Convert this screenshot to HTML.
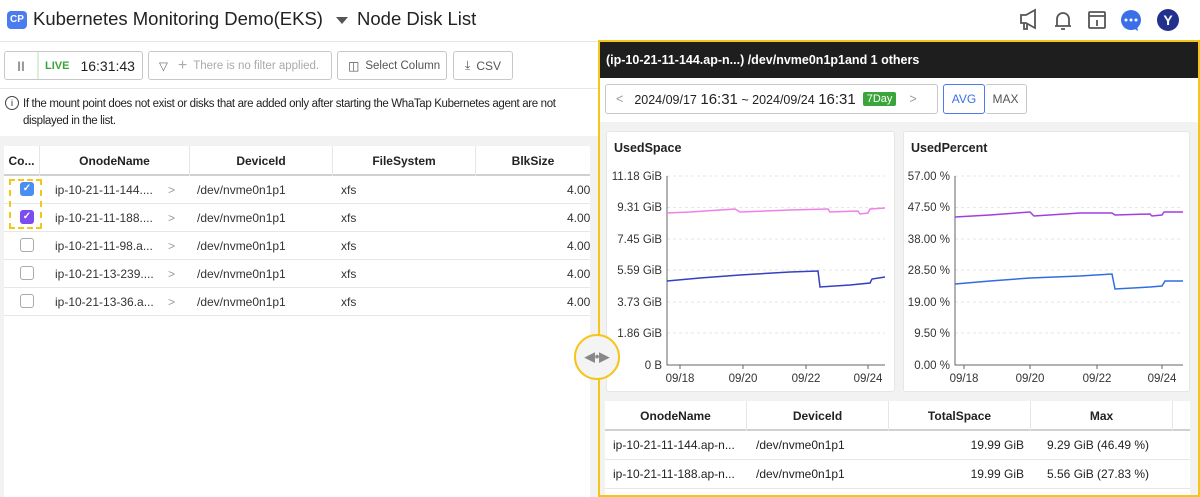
<!DOCTYPE html>
<html><head><meta charset="utf-8"><style>
*{box-sizing:border-box;margin:0;padding:0}
body{width:1200px;height:497px;overflow:hidden;background:#fff;font-family:"Liberation Sans",sans-serif;color:#222;position:relative}
.a{position:absolute}
.btn{position:absolute;border:1px solid #c8c8c8;border-radius:3px;background:#fff;font-size:12px;color:#555;display:flex;align-items:center}
.th{position:absolute;top:0;height:30px;line-height:30px;text-align:center;font-size:12px;font-weight:bold;border-right:1px solid #e6e6e6;color:#222}
.row{position:absolute;left:4px;width:586px;height:28px;border-bottom:1px solid #e6e6e6;font-size:12px;color:#333;overflow:hidden}
.row span{position:absolute;top:7px}
.cb{position:absolute;left:16px;top:6px;width:14px;height:14px;border:1px solid #aaa;border-radius:3px;background:#fff}
.ck{border:none;color:#fff;font-size:10px;text-align:center;line-height:14px;font-weight:bold}
.ax{font-size:11.5px;fill:#333;font-family:"Liberation Sans",sans-serif}
</style></head><body>
<div class="a" style="left:7px;top:11px;width:20px;height:18px;background:#4a7cf0;border-radius:4px;color:#fff;font-size:10px;font-weight:bold;text-align:center;line-height:18px">CP</div>
<div class="a" style="left:33px;top:8px;font-size:18.5px;color:#222">Kubernetes Monitoring Demo(EKS)</div>
<div class="a" style="left:336px;top:17px;width:0;height:0;border-left:6px solid transparent;border-right:6px solid transparent;border-top:7px solid #555"></div>
<div class="a" style="left:357px;top:8px;font-size:18.5px;color:#222">Node Disk List</div>
<svg class="a" style="left:1015px;top:8px" width="170" height="26" viewBox="0 0 170 26">
<g fill="none" stroke="#555" stroke-width="1.8">
<path d="M6 7h5l9-5v18l-9-5H6z M9 15v6h3v-6"/>
<path d="M40 18h16M42 18v-7a6 6 0 0 1 12 0v7M46 21h4"/>
<rect x="74" y="4" width="16" height="16" rx="1"/><path d="M74 8h16M82 12v6"/>
</g>
<circle cx="116" cy="12" r="10" fill="#3b6fe8"/><path d="M118 20l5 3-1-5z" fill="#3b6fe8"/>
<circle cx="111" cy="12" r="1.5" fill="#fff"/><circle cx="116" cy="12" r="1.5" fill="#fff"/><circle cx="121" cy="12" r="1.5" fill="#fff"/>
<circle cx="153" cy="12" r="11" fill="#23308e"/><text x="153" y="17" text-anchor="middle" font-size="14" font-weight="bold" fill="#fff" font-family="Liberation Sans">Y</text>
</svg>
<div class="a" style="left:0;top:41px;width:598px;height:1px;background:#e6e6e6"></div>
<div class="btn" style="left:4px;top:51px;width:139px;height:29px">
<span style="width:32px;text-align:center;color:#999;font-size:14px;font-weight:bold">II</span>
<span style="width:2px;height:27px;background:#d9f0d9"></span>
<span style="color:#3aa53a;font-size:11px;font-weight:bold;margin-left:6px">LIVE</span>
<span style="color:#222;font-size:14px;margin-left:11px">16:31:43</span></div>
<div class="btn" style="left:148px;top:51px;width:184px;height:29px;color:#aaa;font-size:11.5px"><span style="margin-left:10px;color:#666">&#9661;</span><span style="margin-left:10px;font-size:16px">+</span><span style="margin-left:6px">There is no filter applied.</span></div>
<div class="btn" style="left:337px;top:51px;width:110px;height:29px;font-size:11.5px"><span style="margin-left:10px;font-size:12px">&#9707;</span><span style="margin-left:6px">Select Column</span></div>
<div class="btn" style="left:453px;top:51px;width:60px;height:29px"><span style="margin-left:11px">&#10515;</span><span style="margin-left:6px">CSV</span></div>
<div class="a" style="left:0;top:88px;width:598px;height:1px;background:#e6e6e6"></div>
<div class="a" style="left:5px;top:96px;width:14px;height:14px;border:1px solid #444;border-radius:50%;font-size:9px;text-align:center;line-height:12px">i</div>
<div class="a" style="left:23px;top:96px;width:575px;font-size:11.5px;line-height:17px;color:#222;letter-spacing:-0.35px">If the mount point does not exist or disks that are added only after starting the WhaTap Kubernetes agent are not displayed in the list.</div>
<div class="a" style="left:0;top:136px;width:598px;height:361px;background:#f2f2f2"></div>
<div class="a" style="left:4px;top:146px;width:586px;height:172px;background:#fff">
<div class="a" style="left:0;top:0;width:586px;height:30px;border-bottom:2px solid #d0d0d0">
<div class="th" style="left:0;width:36px">Co...</div>
<div class="th" style="left:36px;width:150px">OnodeName</div>
<div class="th" style="left:186px;width:143px">DeviceId</div>
<div class="th" style="left:329px;width:143px">FileSystem</div>
<div class="th" style="left:472px;width:114px;border:none">BlkSize</div></div>
</div>
<div class="a" style="left:4px;top:318px;width:586px;height:179px;background:#fff"></div>
<div class="row" style="top:176px"><div class="cb ck" style="background:#4a8ef0">&#10003;</div><span style="left:51px">ip-10-21-11-144....</span><span style="left:164px;color:#999">&gt;</span><span style="left:193px">/dev/nvme0n1p1</span><span style="left:337px">xfs</span><span style="left:563px">4.00</span></div>
<div class="row" style="top:204px"><div class="cb ck" style="background:#7b4cf0">&#10003;</div><span style="left:51px">ip-10-21-11-188....</span><span style="left:164px;color:#999">&gt;</span><span style="left:193px">/dev/nvme0n1p1</span><span style="left:337px">xfs</span><span style="left:563px">4.00</span></div>
<div class="row" style="top:232px"><div class="cb"></div><span style="left:51px">ip-10-21-11-98.a...</span><span style="left:164px;color:#999">&gt;</span><span style="left:193px">/dev/nvme0n1p1</span><span style="left:337px">xfs</span><span style="left:563px">4.00</span></div>
<div class="row" style="top:260px"><div class="cb"></div><span style="left:51px">ip-10-21-13-239....</span><span style="left:164px;color:#999">&gt;</span><span style="left:193px">/dev/nvme0n1p1</span><span style="left:337px">xfs</span><span style="left:563px">4.00</span></div>
<div class="row" style="top:288px"><div class="cb"></div><span style="left:51px">ip-10-21-13-36.a...</span><span style="left:164px;color:#999">&gt;</span><span style="left:193px">/dev/nvme0n1p1</span><span style="left:337px">xfs</span><span style="left:563px">4.00</span></div>
<div class="a" style="left:9px;top:179px;width:33px;height:50px;border:2px dashed #f5c518"></div>
<div class="a" style="left:598px;top:40px;width:602px;height:457px;border:2px solid #f5c518;background:#f2f2f2"></div>
<div class="a" style="left:600px;top:42px;width:598px;height:36px;background:#1e1e1e;color:#fff;font-size:12.5px;font-weight:bold;line-height:36px;padding-left:6px">(ip-10-21-11-144.ap-n...) /dev/nvme0n1p1and 1 others</div>
<div class="a" style="left:600px;top:78px;width:598px;height:44px;background:#fff"></div>
<div class="btn" style="left:605px;top:84px;width:333px;height:30px;color:#222;font-size:12.5px">
<span style="margin-left:10px;color:#999">&lt;</span><span style="margin-left:11px">2024/09/17 <b style="font-size:15px;font-weight:normal">16:31</b> ~ 2024/09/24 <b style="font-size:15px;font-weight:normal">16:31</b></span>
<span style="margin-left:7px;background:#3aa53a;color:#fff;font-size:11px;padding:1px 4px;border-radius:2px">7Day</span><span style="margin-left:13px;color:#999">&gt;</span></div>
<div class="btn" style="left:943px;top:84px;width:42px;height:30px;border-color:#4a7cf0;color:#3b6fe8;justify-content:center">AVG</div>
<div class="btn" style="left:985px;top:84px;width:42px;height:30px;justify-content:center;border-left:none">MAX</div>
<div class="a" style="left:606px;top:131px;width:289px;height:261px;background:#fff;border:1px solid #e6e6e6;border-radius:3px"></div>
<div class="a" style="left:903px;top:131px;width:287px;height:261px;background:#fff;border:1px solid #e6e6e6;border-radius:3px"></div>
<div class="a" style="left:614px;top:141px;font-size:12.5px;font-weight:bold">UsedSpace</div>
<div class="a" style="left:911px;top:141px;font-size:12.5px;font-weight:bold">UsedPercent</div>
<svg class="a" style="left:0;top:0" width="1200" height="497">
<g stroke="#e6e6e6" stroke-dasharray="3,3" fill="none">
<path d="M667 176H885M667 207.5H885M667 239H885M667 270H885M667 302H885M667 333H885"/>
<path d="M955 176H1183M955 207.5H1183M955 239H1183M955 270H1183M955 302H1183M955 333H1183"/>
</g>
<g stroke="#666" fill="none"><path d="M667 176V365H885M955 176V365H1183"/></g>
<g stroke="#666"><path d="M680 365v4M743 365v4M806 365v4M868 365v4M964 365v4M1030 365v4M1097 365v4M1162 365v4"/></g>
<g class="ax" text-anchor="end">
<text x="662" y="180">11.18 GiB</text><text x="662" y="211">9.31 GiB</text><text x="662" y="243">7.45 GiB</text><text x="662" y="274">5.59 GiB</text><text x="662" y="306">3.73 GiB</text><text x="662" y="337">1.86 GiB</text><text x="662" y="369">0 B</text>
<text x="950" y="180">57.00 %</text><text x="950" y="211">47.50 %</text><text x="950" y="243">38.00 %</text><text x="950" y="274">28.50 %</text><text x="950" y="306">19.00 %</text><text x="950" y="337">9.50 %</text><text x="950" y="369">0.00 %</text>
</g>
<g class="ax" text-anchor="middle">
<text x="680" y="382">09/18</text><text x="743" y="382">09/20</text><text x="806" y="382">09/22</text><text x="868" y="382">09/24</text>
<text x="964" y="382">09/18</text><text x="1030" y="382">09/20</text><text x="1097" y="382">09/22</text><text x="1162" y="382">09/24</text>
</g>
<g fill="none" stroke-width="1.5">
<path stroke="#ee82e6" d="M667 213L690 212L735 209L740 212L790 210L828 209L830 212L858 211L860 214L868 213L870 209L885 208"/>
<path stroke="#3340c0" d="M667 281L700 278L740 275L790 272L818 271L820 287L850 285L870 283L872 279L885 277"/>
<path stroke="#a03ee0" d="M955 217L990 215L1030 212L1034 216L1080 213L1112 213L1115 215L1150 214L1152 216L1162 215L1164 212L1183 212"/>
<path stroke="#2f6ee0" d="M955 284L990 281L1030 278L1080 276L1112 274L1115 289L1150 287L1162 286L1165 281L1183 281"/>
</g>
</svg>
<div class="a" style="left:605px;top:401px;width:585px;height:94px;background:#fff">
<div class="a" style="left:0;top:0;width:585px;height:30px;border-bottom:2px solid #d0d0d0">
<div class="th" style="left:0;width:142px">OnodeName</div>
<div class="th" style="left:142px;width:142px">DeviceId</div>
<div class="th" style="left:284px;width:142px">TotalSpace</div>
<div class="th" style="left:426px;width:142px">Max</div></div>
<div class="a" style="left:0;top:30px;width:585px;height:29px;border-bottom:1px solid #e6e6e6;font-size:12px;line-height:29px"><span class="a" style="left:8px">ip-10-21-11-144.ap-n...</span><span class="a" style="left:151px">/dev/nvme0n1p1</span><span class="a" style="right:166px">19.99 GiB</span><span class="a" style="left:442px">9.29 GiB (46.49 %)</span></div>
<div class="a" style="left:0;top:59px;width:585px;height:29px;border-bottom:1px solid #e6e6e6;font-size:12px;line-height:29px"><span class="a" style="left:8px">ip-10-21-11-188.ap-n...</span><span class="a" style="left:151px">/dev/nvme0n1p1</span><span class="a" style="right:166px">19.99 GiB</span><span class="a" style="left:442px">5.56 GiB (27.83 %)</span></div>
</div>
<div class="a" style="left:574px;top:334px;width:46px;height:46px;border:2px solid #f5c518;border-radius:50%;background:#f4f4f4;color:#888;font-size:13px;text-align:center;line-height:42px;font-weight:bold">&#9664;&#8226;&#9654;</div>
</body></html>
